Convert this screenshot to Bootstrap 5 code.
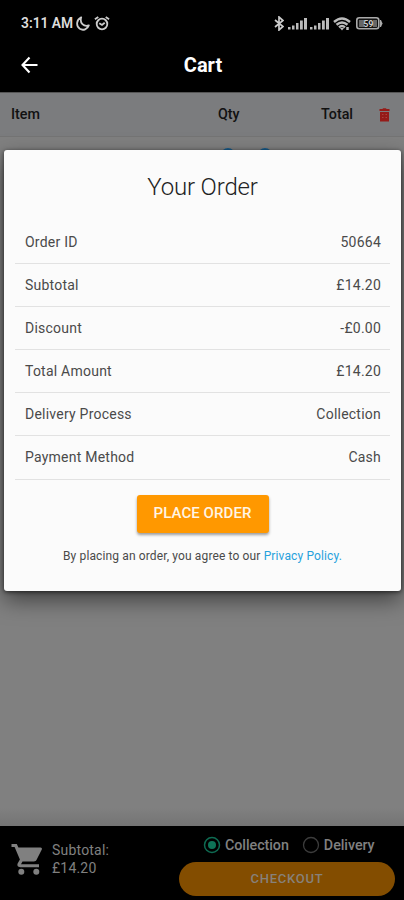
<!DOCTYPE html>
<html lang="en">
<head>
<meta charset="utf-8">
<meta name="viewport" content="width=device-width, initial-scale=1">
<title>Cart</title>
<link href="https://cdn.jsdelivr.net/npm/bootstrap@5.3.0/dist/css/bootstrap.min.css" rel="stylesheet">
<style>
body{font-family:Roboto,"Liberation Sans",sans-serif;background:#808080;color:#333;height:900px;overflow:hidden}
.screen{height:900px}
svg{display:block;flex:none}
.status{height:46px;padding:1px 21px 0 21px;font-size:13.8px;font-weight:600;color:#ddd}
.glyph-moon{margin-left:3px}
.topbar{height:46px;padding:0 20px 8px}
.topbar h1{font-size:20px;font-weight:700;margin:0;line-height:24px}
.heads{height:45px;background:#7b7c7e;border-top:1px solid #555;border-bottom:1px solid #747474;color:#111;font-size:14.3px;font-weight:500;padding:0 14px 0 11px}
.c-item{width:207px}.c-qty{width:60px}.c-total{width:75px}
.steppers{height:13px;padding:11px 0 0 221px;gap:23px}
.steppers i{width:14px;height:14px;border-radius:50%;background:#185f91}
.fade-edge{height:18px;background:linear-gradient(#808080,#747474)}
.bottom{height:74px;color:#808080;padding:0 9px 4px 11px}
.sub{font-size:14px;line-height:18px;letter-spacing:.2px;margin-left:9px;margin-top:-4px}
.cart-icon{margin-top:-3px}
.bright{width:216px}
.opts{font-size:14.3px;font-weight:500;line-height:18px;padding:9px 0 0 24px}
.opts span{letter-spacing:-.05px;padding-top:1px}
.checkout{height:34px;border-radius:17px;background:#834d00;color:#87817a;font-size:13px;font-weight:500;letter-spacing:.75px;border:0;margin-top:8px;padding:0}
.dialog{position:absolute;left:4px;top:150px;width:397px;height:441px;background:#fbfbfb;border-radius:3px;box-shadow:0 9px 22px rgba(0,0,0,.5),0 1px 4px rgba(0,0,0,.6);padding:0 11px}
.dialog h2{font-size:24px;font-weight:350;line-height:28px;margin:23px 0 20px;letter-spacing:-.15px;color:#222}
.line{height:43.1px;border-bottom:1px solid #e2e2e2;padding:0 9px 0 10px;font-size:14px;letter-spacing:.23px;color:#4a4a4a}
.place{width:132px;height:38px;margin-top:15px;background:#ff9800;color:#fff5e5;border:0;border-radius:3px;padding:0;font-size:15px;font-weight:500;letter-spacing:.08px;box-shadow:0 2px 3px rgba(0,0,0,.38)}
.terms{font-size:12px;line-height:16px;color:#4a4a4a;margin-top:15px;letter-spacing:.13px;white-space:nowrap}
.terms a{color:#27a1dc}
</style>
<script src="https://cdn.jsdelivr.net/npm/bootstrap@5.3.0/dist/js/bootstrap.bundle.min.js"></script>
</head>
<body>
<div class="screen d-flex flex-column position-relative">
  <header class="bg-black text-white">
    <div class="status d-flex align-items-center justify-content-between">
      <div class="d-flex align-items-center">
        <span>3:11 AM</span>
        <svg class="glyph-moon" width="14" height="15" viewBox="0 0 14 15" fill="none" stroke="#ccc" stroke-width="1.8"><path d="M5.2 1.3C.3 3.7-.2 10 3.8 12.8c3.4 2.2 7.800.3 9-3.400-5 1.800-9.400-2.600-7.600-8.100z" stroke-linejoin="round"/></svg>
        <svg class="ms-1" width="16" height="15" viewBox="0 0 16 15" fill="none" stroke="#ccc" stroke-width="1.8"><circle cx="8" cy="8" r="5.3"/><path d="M.9 3.300 4.300.9M15.100 3.300 11.700.9M5.300 7.200 8 9l2.700-2.200"/></svg>
      </div>
      <div class="d-flex align-items-center">
        <svg width="10" height="15" viewBox="0 0 10 15" fill="none" stroke="#ccc" stroke-width="1.7"><path d="M1 4l8 6.500-4 3.500V1l4 3.500L1 11"/></svg>
        <svg width="19" height="13" viewBox="0 0 19 13" fill="#bbb" style="margin-left:4px"><path d="M0 10h2.500v2.500H0zM4 8.500h2.500v4H4zM8 6h2.500v6.500H8zM12 3.500h2.800v9H12zM16 1h3v11.500h-3z"/></svg>
        <svg width="19" height="13" viewBox="0 0 19 13" fill="#bbb" style="margin-left:3px"><path d="M0 10h2.500v2.500H0zM4 8.500h2.500v4H4zM8 6h2.500v6.500H8zM12 3.500h2.800v9H12zM16 1h3v11.500h-3z"/></svg>
        <svg width="18" height="14" viewBox="0 0 18 14" fill="none" stroke="#bbb" stroke-width="2.4" style="margin-left:4px"><path d="M1 5Q9-2 17 5M3.500 7.800q5.500-4.500 11 0M6 10.300q3-2.500 6 0"/><path d="M7 11h4l-2 2.500z" fill="#bbb" stroke="none"/><path d="M14.500 10v3" stroke-width="2.500"/></svg>
        <svg width="27" height="13" viewBox="0 0 27 13" style="margin-left:5px"><rect x=".8" y=".8" width="22" height="11" rx="2.500" fill="#111" stroke="#aaa" stroke-width="1.600"/><path d="M3 3h5v7H3zM17 3h4v7h-4z" fill="#666"/><path d="M24 3h1l1.500 3.500L25 10h-1z" fill="#aaa"/><text x="12.300" y="9.700" text-anchor="middle" font-family="Roboto" font-size="9" font-weight="700" fill="#ccc">59</text></svg>
      </div>
    </div>
    <div class="topbar d-flex align-items-center">
      <svg width="18" height="18" viewBox="0 0 18 18" fill="none" stroke="#fff" stroke-width="2.1"><path d="M9.500 1.500 2.500 9l7 7.500M2 9h15.500"/></svg>
      <h1 class="flex-grow-1 text-center">Cart</h1>
      <span class="ps-3"></span>
    </div>
  </header>
  <main class="flex-grow-1 d-flex flex-column">
    <div class="heads d-flex align-items-center">
      <span class="c-item">Item</span><span class="c-qty">Qty</span><span class="c-total text-end">Total</span>
      <svg class="ms-auto" width="11" height="14" viewBox="0 0 11 14"><path d="M.5 1h3L4 .3h3l.5.7h3v2H.5zM1 4h9v9.500H1z" fill="#951b18"/><path d="M3 6.500h1.500M6.500 6.500H8M3 9.500h1.500M6.500 9.500H8" stroke="#a8443f" stroke-width="1"/></svg>
    </div>
    <div class="steppers d-flex overflow-hidden"><i></i><i></i></div>
    <div class="fade-edge mt-auto"></div>
  </main>
  <footer class="bottom bg-black d-flex align-items-center">
    <svg class="cart-icon" width="32" height="33" viewBox="0 0 32 33"><path d="M.5 1h5.300l1.600 3.500h22.100c1.200 0 1.800 1 1.300 2l-5.200 10.200c-.5 1-1.400 1.700-2.700 1.700H11.500L10 21.300h18v3H9.500c-2.800 0-3.800-2-2.600-4.200l2-3.600L3.600 4H.5z" fill="#808080"/><circle cx="10.300" cy="28.700" r="3" fill="#808080"/><circle cx="25.300" cy="28.700" r="3" fill="#808080"/></svg>
    <div class="sub">Subtotal:<br>£14.20</div>
    <div class="bright ms-auto align-self-start">
      <div class="opts d-flex align-items-center">
        <svg width="18" height="18" viewBox="0 0 18 18"><circle cx="9" cy="9" r="7.500" fill="none" stroke="#0e6b52" stroke-width="1.500"/><circle cx="9" cy="9" r="4" fill="#0e7357"/></svg>
        <span style="margin-left:4px">Collection</span>
        <svg width="18" height="18" viewBox="0 0 18 18" style="margin-left:13px"><circle cx="9" cy="9" r="7.500" fill="none" stroke="#3c3c3c" stroke-width="1.300"/></svg>
        <span style="margin-left:4px">Delivery</span>
      </div>
      <button class="btn checkout d-block w-100">CHECKOUT</button>
    </div>
  </footer>
  <section class="dialog" role="dialog">
    <h2 class="text-center">Your Order</h2>
    <div class="line d-flex align-items-center justify-content-between"><span>Order ID</span><span>50664</span></div>
    <div class="line d-flex align-items-center justify-content-between"><span>Subtotal</span><span>£14.20</span></div>
    <div class="line d-flex align-items-center justify-content-between"><span>Discount</span><span>-£0.00</span></div>
    <div class="line d-flex align-items-center justify-content-between"><span>Total Amount</span><span>£14.20</span></div>
    <div class="line d-flex align-items-center justify-content-between"><span>Delivery Process</span><span>Collection</span></div>
    <div class="line d-flex align-items-center justify-content-between"><span>Payment Method</span><span>Cash</span></div>
    <button class="btn place d-block mx-auto">PLACE ORDER</button>
    <p class="terms text-center mb-0">By placing an order, you agree to our <a class="text-decoration-none" href="#">Privacy Policy.</a></p>
  </section>
</div>
</body>
</html>
